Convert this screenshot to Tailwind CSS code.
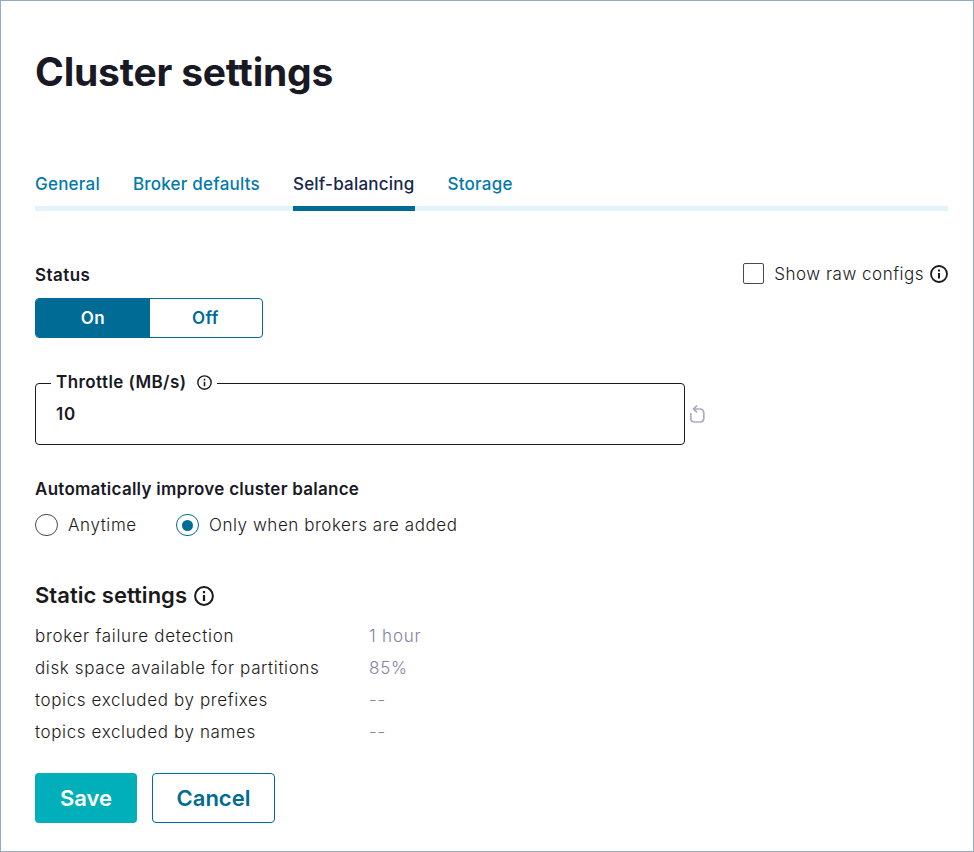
<!DOCTYPE html>
<html lang="en">
<head>
  <meta charset="UTF-8" />
  <meta name="viewport" content="width=device-width, initial-scale=1.0"/>
  <title>Cluster settings</title>
  <script src="https://cdn.jsdelivr.net/npm/@tailwindcss/browser@4"></script>
</head>
<body class="bg-white font-['Inter',sans-serif] text-[#191924]">
  <div class="relative flex flex-col items-start w-[974px] h-[852px] border border-[#8fafc0] pl-[34px] pr-[25px] overflow-hidden">
    <h1 class="mt-[47px] text-[39px] leading-[48px] font-bold tracking-[-0.2px] whitespace-nowrap">Cluster settings</h1>

    <nav class="mt-[76px] w-full h-[39px] flex gap-[33px] border-b-[5px] border-[#e3f3fb] text-[17px] leading-6 font-medium tracking-[0.22px] text-[#0279ac] whitespace-nowrap">
      <a href="#" class="h-[39px]">General</a>
      <a href="#" class="h-[39px]">Broker defaults</a>
      <a href="#" class="h-[39px] border-b-[5px] border-[#006b95] text-[#17264d]">Self-balancing</a>
      <a href="#" class="h-[39px]">Storage</a>
    </nav>

    <div class="mt-[52px] w-full flex justify-between items-start">
      <div>
        <h3 class="text-[17px] leading-6 font-semibold tracking-[0.45px]">Status</h3>
        <div class="mt-[11px] w-[228px] h-10 flex rounded border border-[#006b95] overflow-hidden text-[17px] font-semibold tracking-[0.4px]">
          <button class="w-[114px] pt-0.5 bg-[#006b95] text-white">On</button>
          <button class="flex-1 pt-0.5 pr-px text-[#006b95]">Off</button>
        </div>
      </div>
      <label class="flex items-center h-5 text-[17px] font-light tracking-[0.5px] text-[#1a1a1a] whitespace-nowrap">
        <span class="size-[21px] rounded-[2px] border border-[#4a4563] mr-[10px]"></span>
        <span class="pt-[3px]">Show raw configs</span>
        <svg class="size-[18px] ml-[6px] mt-px" viewBox="0 0 18 18" fill="none" stroke="currentColor" stroke-width="1.8"><circle cx="9" cy="9" r="8"/><path stroke-width="2" d="M9 8v5.4M9 4.4v2.1"/></svg>
      </label>
    </div>

    <div class="mt-[45px] flex items-center">
      <div class="relative w-[650px] h-[62px] border border-[#191924] rounded pl-5 pt-[18px] text-[17px] leading-6 font-semibold tracking-[0.8px]">
        <span class="absolute left-[15px] -top-[14px] h-6 w-[166px] bg-white pl-[5px] flex items-center tracking-[0.42px] whitespace-nowrap">Throttle (MB/s)
          <svg class="size-[15px] ml-[10px] mt-px" viewBox="0 0 18 18" fill="none" stroke="currentColor" stroke-width="1.7"><circle cx="9" cy="9" r="8"/><path stroke-width="1.9" d="M9 8v5.4M9 4.4v2.1"/></svg>
        </span>
        10
      </div>
      <svg class="w-4 h-[18px] ml-1 text-[#aeabc0]" viewBox="0 0 16 18" fill="none" stroke="currentColor" stroke-width="1.7"><path d="M1.8 8v5q0 4 4 4h5q4 0 4-4V8q0-4-4-4H4.5M8 .6L4.5 4 8 7.4"/></svg>
    </div>

    <h3 class="mt-8 text-[17px] leading-6 font-semibold tracking-[0.26px] whitespace-nowrap">Automatically improve cluster balance</h3>
    <div class="mt-3 h-6 flex items-center text-[17px] font-light tracking-[0.55px] text-[#1a1a1a] whitespace-nowrap">
      <span class="w-[23px] h-[22px] rounded-full border border-[#4a4563] mr-[10px]"></span>
      <span class="w-[108px] pt-0.5 tracking-[0.6px]">Anytime</span>
      <span class="w-[23px] h-[22px] rounded-full border border-[#006b95] mr-[10px] flex items-center justify-center"><span class="size-[11px] rounded-full bg-[#006b95]"></span></span>
      <span class="pt-0.5">Only when brokers are added</span>
    </div>

    <h2 class="mt-[43px] flex items-center text-[22px] leading-[30px] font-semibold tracking-[0.02px] text-[#1a1a1a] whitespace-nowrap">Static settings
      <svg class="size-5 ml-[7px] mt-0.5" viewBox="0 0 18 18" fill="none" stroke="currentColor" stroke-width="1.8"><circle cx="9" cy="9" r="8"/><path stroke-width="2" d="M9 8v5.4M9 4.4v2.1"/></svg>
    </h2>
    <dl class="mt-[10px] grid grid-cols-[334px_auto] text-[17px] leading-8 font-light tracking-[0.62px] text-[#1a1a1a] whitespace-nowrap">
      <dt class="tracking-[0.7px]">broker failure detection</dt><dd class="text-[#8580a6] tracking-[0.8px]">1 hour</dd>
      <dt>disk space available for partitions</dt><dd class="text-[#8580a6] tracking-[0.8px]">85%</dd>
      <dt>topics excluded by prefixes</dt><dd class="text-[#8580a6] tracking-[0.8px]">--</dd>
      <dt>topics excluded by names</dt><dd class="text-[#8580a6] tracking-[0.8px]">--</dd>
    </dl>

    <div class="mt-[25px] flex gap-[15px] text-[22px] font-semibold">
      <button class="w-[102px] h-[50px] rounded bg-[#00afba] text-white">Save</button>
      <button class="w-[123px] h-[50px] rounded border border-[#006b95] text-[#006b95]">Cancel</button>
    </div>
  </div>
</body>
</html>
